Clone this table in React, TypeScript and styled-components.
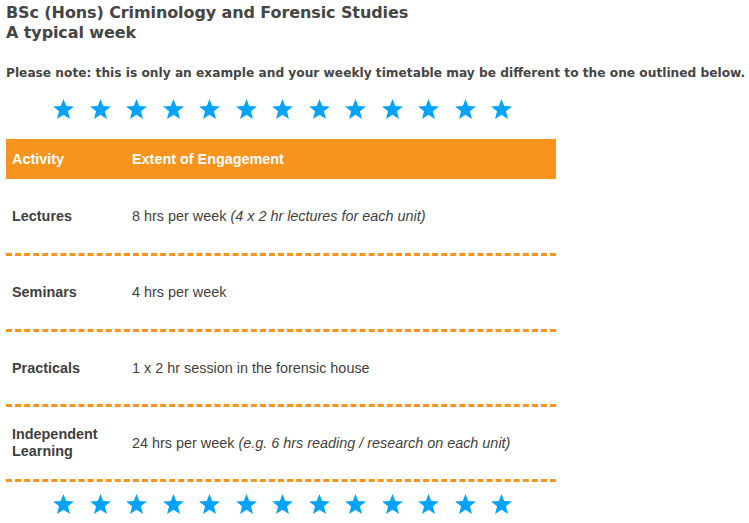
import React from "react";
import styled, { createGlobalStyle } from "styled-components";

const GlobalStyle = createGlobalStyle`
  body {
    margin: 0;
    background: #ffffff;
    font-family: "Liberation Sans", Arial, sans-serif;
  }
`;

const Page = styled.div`
  padding: 0 6px;
  width: 749px;
  box-sizing: border-box;
`;

const Title = styled.h1`
  margin: 3px 0 0;
  font-family: "DejaVu Sans", Verdana, sans-serif;
  font-size: 16px;
  line-height: 20px;
  font-weight: 700;
  color: #454545;
  letter-spacing: -0.1px;
`;

const Notice = styled.p`
  margin: 22px 0 0;
  font-family: "DejaVu Sans", Verdana, sans-serif;
  font-size: 12.2px;
  line-height: 17px;
  font-weight: 700;
  color: #454545;
  white-space: nowrap;
`;

const StarRow = styled.div<{ $top: number }>`
  display: flex;
  gap: 15.5px;
  margin-top: ${(p) => p.$top}px;
  padding-left: 47px;
  height: 20px;
`;

const StarIcon = styled.svg`
  width: 21px;
  height: 20px;
  flex: none;
  fill: #00a3ff;
`;

const Table = styled.div`
  width: 550px;
  margin-top: 20px;
  font-size: 14.4px;
  color: #3f3f3f;
`;

const HeaderRow = styled.div`
  display: grid;
  grid-template-columns: 120px 1fr;
  align-items: center;
  height: 40px;
  background: #f7941d;
  color: #ffffff;
  font-weight: 700;
`;

const Row = styled.div<{ $height: number }>`
  display: grid;
  grid-template-columns: 120px 1fr;
  align-items: center;
  height: ${(p) => p.$height}px;
  border-bottom: 3px dashed #f7941d;
`;

const Cell = styled.div`
  padding: 0 6px;
  line-height: 17px;
`;

const Label = styled(Cell)`
  font-weight: 700;
  color: #404040;
`;

const Aside = styled.em`
  font-style: italic;
`;

function Star() {
  return (
    <StarIcon viewBox="0 0 24 23" aria-hidden="true">
      <polygon points="12,0 15.1,8.1 24,8.6 17.1,14.2 19.4,23 12,18.1 4.6,23 6.9,14.2 0,8.6 8.9,8.1" />
    </StarIcon>
  );
}

function Stars({ top }: { top: number }) {
  return (
    <StarRow $top={top}>
      {Array.from({ length: 13 }, (_, i) => (
        <Star key={i} />
      ))}
    </StarRow>
  );
}

const rows: { label: string; text: string; aside?: string; height: number }[] = [
  { label: "Lectures", text: "8 hrs per week ", aside: "(4 x 2 hr lectures for each unit)", height: 74 },
  { label: "Seminars", text: "4 hrs per week", height: 73 },
  { label: "Practicals", text: "1 x 2 hr session in the forensic house", height: 72 },
  { label: "Independent Learning", text: "24 hrs per week ", aside: "(e.g. 6 hrs reading / research on each unit)", height: 72 },
];

export default function App() {
  return (
    <Page>
      <GlobalStyle />
      <Title>
        BSc (Hons) Criminology and Forensic Studies
        <br />A typical week
      </Title>
      <Notice>
        Please note: this is only an example and your weekly timetable may be different to the one outlined below.
      </Notice>
      <Stars top={17} />
      <Table>
        <HeaderRow>
          <Cell>Activity</Cell>
          <Cell>Extent of Engagement</Cell>
        </HeaderRow>
        {rows.map((r) => (
          <Row key={r.label} $height={r.height}>
            <Label>{r.label}</Label>
            <Cell>
              {r.text}
              {r.aside && <Aside>{r.aside}</Aside>}
            </Cell>
          </Row>
        ))}
      </Table>
      <Stars top={12} />
    </Page>
  );
}
